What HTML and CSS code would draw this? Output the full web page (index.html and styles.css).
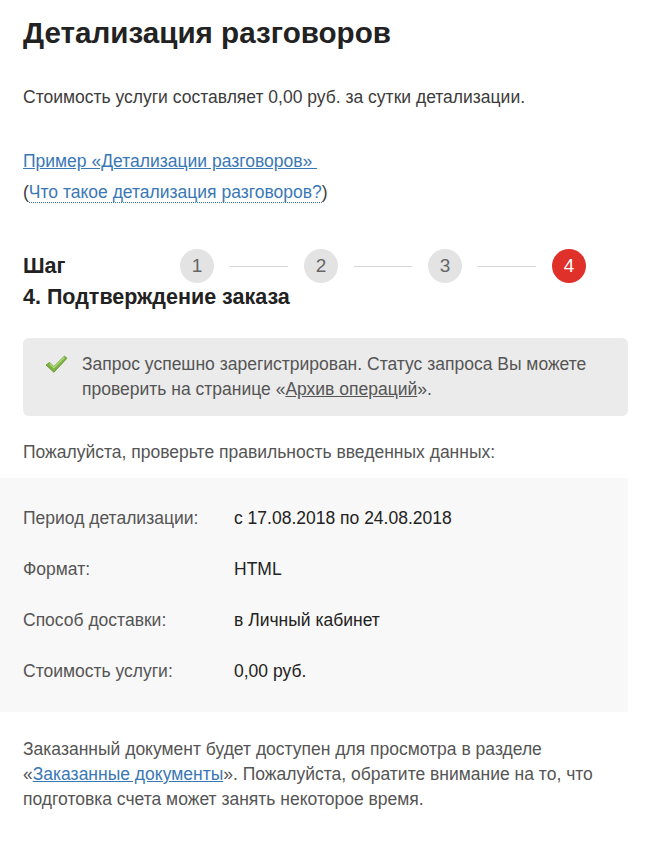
FILE: index.html
```html
<!DOCTYPE html>
<html lang="ru">
<head>
  <meta charset="UTF-8">
  <meta name="viewport" content="width=device-width, initial-scale=1.0">
  <title>Детализация разговоров</title>
  <link rel="stylesheet" href="styles.css">
</head>
<body>
  <div class="page">
    <h1>Детализация разговоров</h1>

    <p class="cost">Стоимость услуги составляет 0,00 руб. за сутки детализации.</p>

    <div class="links">
      <div><a href="#" class="link">Пример «Детализации разговоров»&nbsp;</a></div>
      <div>(<a href="#" class="link link-dotted">Что такое детализация разговоров?</a>)</div>
    </div>

    <div class="step-row">
      <div class="step-label">Шаг</div>
      <div class="stepper">
        <span class="step">1</span>
        <span class="step-line"></span>
        <span class="step">2</span>
        <span class="step-line"></span>
        <span class="step">3</span>
        <span class="step-line"></span>
        <span class="step step-active">4</span>
      </div>
    </div>
    <h2 class="step-title">4. Подтверждение заказа</h2>

    <div class="alert">
      <svg class="alert-icon" width="23" height="19" viewBox="0 0 22 18">
        <path d="M1 9.5 L4.5 7 L8.5 11 L18.5 1 L21 3 L8.5 16.5 Z" fill="#7cb342" stroke="#5c8f2a" stroke-width="0.8" stroke-linejoin="round"/>
        <path d="M4.5 8 L8.5 12 L18.5 2" fill="none" stroke="#b5dc7a" stroke-width="1.2"/>
      </svg>
      Запрос успешно зарегистрирован. Статус запроса Вы можете проверить на странице «<a href="#" class="alert-link">Архив операций</a>».
    </div>

    <p class="check">Пожалуйста, проверьте правильность введенных данных:</p>

    <div class="details">
      <div class="details-row">
        <span class="details-label">Период детализации:</span>
        <span class="details-value">с 17.08.2018 по 24.08.2018</span>
      </div>
      <div class="details-row">
        <span class="details-label">Формат:</span>
        <span class="details-value">HTML</span>
      </div>
      <div class="details-row">
        <span class="details-label">Способ доставки:</span>
        <span class="details-value">в Личный кабинет</span>
      </div>
      <div class="details-row">
        <span class="details-label">Стоимость услуги:</span>
        <span class="details-value">0,00 руб.</span>
      </div>
    </div>

    <p class="note">Заказанный документ будет доступен для просмотра в разделе «<a href="#" class="link">Заказанные документы</a>». Пожалуйста, обратите внимание на то, что подготовка счета может занять некоторое время.</p>
  </div>
</body>
</html>
```

FILE: styles.css
```css
:root {
  --text: #3c3c3c;
  --text-dark: #222222;
  --text-muted: #555555;
  --link: #3a78b5;
  --gray-bg: #ebebeb;
  --light-bg: #f8f8f8;
  --circle: #e3e3e3;
  --red: #e0302a;
}

body {
  margin: 0;
  font-family: 'Liberation Sans', Arial, sans-serif;
  font-size: 17.5px;
  color: var(--text);
  background-color: #ffffff;
}

.page {
  padding: 16px 42px 40px 23px;
}

h1 {
  margin: 0;
  font-size: 29.6px;
  line-height: 34px;
  font-weight: bold;
  color: var(--text-dark);
}

.cost {
  margin: 35px 0 0;
  line-height: 24px;
}

.links {
  margin-top: 37px;
  line-height: 31px;
}

.link {
  color: var(--link);
  text-decoration: underline;
}

.link-dotted {
  text-decoration: none;
  border-bottom: 1px dotted var(--link);
}

/* Шаги */
.step-row {
  display: flex;
  align-items: center;
  margin-top: 41px;
  height: 34px;
}

.step-label {
  width: 157px;
  font-size: 21.5px;
  font-weight: bold;
  color: var(--text-dark);
}

.stepper {
  display: flex;
  align-items: center;
  gap: 16px;
}

.step {
  width: 34px;
  height: 34px;
  border-radius: 50%;
  background-color: var(--circle);
  color: #666666;
  font-size: 19px;
  display: flex;
  align-items: center;
  justify-content: center;
}

.step-active {
  background-color: var(--red);
  color: #ffffff;
}

.step-line {
  width: 58px;
  height: 1px;
  background-color: #d8d8d8;
}

.step-title {
  margin: 2px 0 0;
  font-size: 21.5px;
  line-height: 24px;
  font-weight: bold;
  color: var(--text-dark);
}

/* Сообщение */
.alert {
  position: relative;
  margin-top: 29px;
  padding: 14px 20px 14px 59px;
  background-color: var(--gray-bg);
  border-radius: 6px;
  line-height: 25px;
  color: var(--text-muted);
}

.alert-icon {
  position: absolute;
  left: 22px;
  top: 17px;
}

.alert-link {
  color: var(--text-muted);
  text-decoration: underline;
}

.check {
  margin: 24px 0 0;
  line-height: 24px;
  color: var(--text-muted);
}

/* Детали заказа */
.details {
  margin: 14px 0 0 -23px;
  padding: 15px 0 15px 23px;
  background-color: var(--light-bg);
}

.details-row {
  display: flex;
  line-height: 51px;
}

.details-label {
  width: 211px;
  color: var(--text-muted);
}

.details-value {
  color: var(--text-dark);
}

.note {
  margin: 25px 0 0;
  line-height: 25px;
  color: var(--text-muted);
}
```
